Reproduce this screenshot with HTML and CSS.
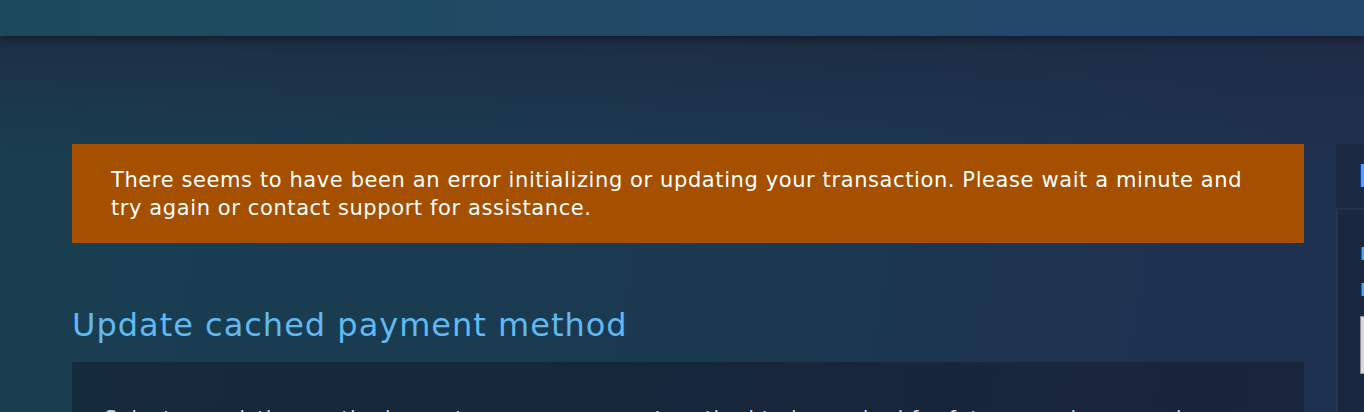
FILE: index.html
```html
<!DOCTYPE html>
<html lang="en">
<head>
<meta charset="UTF-8">
<meta name="viewport" content="width=device-width, initial-scale=1.0">
<title>Update cached payment method</title>
<link rel="stylesheet" href="styles.css">
</head>
<body>
<div class="top-bar"></div>

<div class="page">
  <div class="main-col">
    <div class="error-box">
      There seems to have been an error initializing or updating your transaction. Please wait a minute and
      try again or contact support for assistance.
    </div>

    <h2 class="section-title">Update cached payment method</h2>

    <div class="section-panel">
      <p>Select an existing method or enter a new payment method to be cached for future purchases and renewals.</p>
    </div>
  </div>

  <div class="side-col">
    <div class="side-header">
      <span class="side-title">Billing</span>
    </div>
    <div class="side-body">
      <div class="side-label">Payment method</div>
      <div class="side-label">Billing address</div>
      <div class="side-input"></div>
    </div>
  </div>
</div>
</body>
</html>
```

FILE: styles.css
```css
html, body {
  margin: 0;
  padding: 0;
}

body {
  font-family: 'DejaVu Sans', Verdana, sans-serif;
  min-height: 100vh;
  overflow: hidden;
  background:
    linear-gradient(to bottom, #1e2a42 0, rgba(30, 42, 66, 0) 160px),
    linear-gradient(100deg, #183f50 0%, #1a3a50 45%, #1f2f50 100%);
  background-color: #1b3249;
}

.top-bar {
  height: 36px;
  background: linear-gradient(to right, #1c4a5a 0%, #214a66 40%, #22486a 70%, #23466b 100%);
  box-shadow: 0 2px 12px rgba(0, 0, 0, 0.45);
  position: relative;
}

.page {
  display: flex;
  gap: 32px;
  padding: 108px 0 0 72px;
  width: 1700px;
}

.main-col {
  width: 1232px;
  flex-shrink: 0;
}

.error-box {
  background-color: #a54f00;
  color: #fff;
  font-size: 21px;
  letter-spacing: 0.6px;
  line-height: 28px;
  padding: 22px 39px 21px;
}

.section-title {
  margin: 0;
  padding-top: 63px;
  font-size: 32px;
  letter-spacing: 1px;
  font-weight: normal;
  line-height: 38px;
  color: #62b8f0;
}

.section-panel {
  margin-top: 18px;
  height: 120px;
  background: linear-gradient(100deg, #152a3a 0%, #17263b 60%, #19243d 100%);
  padding: 43px 32px 0;
}

.section-panel p {
  margin: 0;
  color: #c6d4df;
  font-size: 21px;
  letter-spacing: 0.5px;
  line-height: 28px;
}

.side-col {
  width: 300px;
  flex-shrink: 0;
}

.side-header {
  height: 64px;
  background-color: #1b2841;
  padding: 18px 0 0 22px;
  box-sizing: border-box;
}

.side-title {
  color: #4aa8f0;
  font-size: 32px;
  line-height: 28px;
  font-weight: bold;
}

.side-body {
  height: 300px;
  background-color: #1a2740;
  border-top: 2px solid #243349;
  border-left: 2px solid #26364e;
  padding: 34px 0 0 22px;
}

.side-label {
  color: #4aa8f0;
  font-size: 18px;
  font-weight: bold;
  line-height: 20px;
  margin-bottom: 16px;
}

.side-input {
  margin-top: 10px;
  width: 240px;
  height: 56px;
  background-color: #d6d8da;
  border: 1px solid #8a8f96;
}
```
